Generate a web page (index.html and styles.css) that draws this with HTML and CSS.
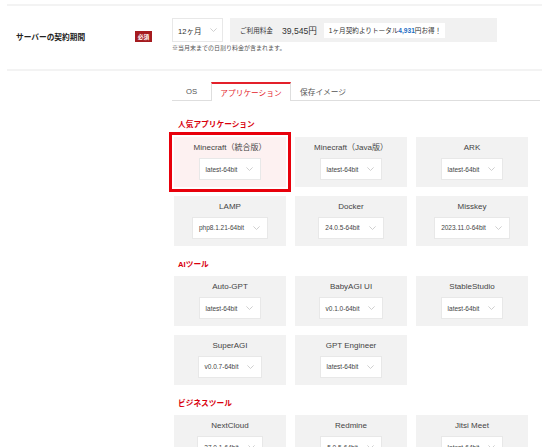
FILE: index.html
```html
<!DOCTYPE html>
<html lang="ja">
<head>
<meta charset="utf-8">
<title>サーバーの契約期間</title>
<link rel="stylesheet" href="styles.css">
</head>
<body>
<div class="page">
  <section class="contract">
    <div class="contract-label">
      <span class="label-text">サーバーの契約期間</span>
      <span class="badge">必須</span>
    </div>
    <div class="contract-body">
      <div class="contract-line">
        <div class="select select-term"><span>12ヶ月</span><svg class="chev" viewBox="0 0 7 4" width="7" height="4"><polyline points="0.4,0.4 3.5,3.5 6.6,0.4"/></svg></div>
        <div class="price-box">
          <span class="price-label">ご利用料金</span>
          <span class="price-value">39,545円</span>
          <span class="price-note">1ヶ月契約よりトータル<b>4,931</b>円お得！</span>
        </div>
      </div>
      <p class="notice">※当月末までの日割り料金が含まれます。</p>
    </div>
  </section>

  <section class="apps">
    <div class="tabs">
      <div class="tab tab-os">OS</div>
      <div class="tab tab-active">アプリケーション</div>
      <div class="tab">保存イメージ</div>
    </div>
    <div class="panel">
      <h3 class="group-title group-first">人気アプリケーション</h3>
      <div class="grid">
        <div class="card card-selected">
          <div class="card-title">Minecraft（統合版）</div>
          <div class="select select-card"><span>latest-64bit</span><svg class="chev" viewBox="0 0 7 4" width="7" height="4"><polyline points="0.4,0.4 3.5,3.5 6.6,0.4"/></svg></div>
        </div>
        <div class="card">
          <div class="card-title">Minecraft（Java版）</div>
          <div class="select select-card"><span>latest-64bit</span><svg class="chev" viewBox="0 0 7 4" width="7" height="4"><polyline points="0.4,0.4 3.5,3.5 6.6,0.4"/></svg></div>
        </div>
        <div class="card">
          <div class="card-title">ARK</div>
          <div class="select select-card"><span>latest-64bit</span><svg class="chev" viewBox="0 0 7 4" width="7" height="4"><polyline points="0.4,0.4 3.5,3.5 6.6,0.4"/></svg></div>
        </div>
        <div class="card">
          <div class="card-title">LAMP</div>
          <div class="select select-card"><span>php8.1.21-64bit</span><svg class="chev" viewBox="0 0 7 4" width="7" height="4"><polyline points="0.4,0.4 3.5,3.5 6.6,0.4"/></svg></div>
        </div>
        <div class="card">
          <div class="card-title">Docker</div>
          <div class="select select-card"><span>24.0.5-64bit</span><svg class="chev" viewBox="0 0 7 4" width="7" height="4"><polyline points="0.4,0.4 3.5,3.5 6.6,0.4"/></svg></div>
        </div>
        <div class="card">
          <div class="card-title">Misskey</div>
          <div class="select select-card"><span>2023.11.0-64bit</span><svg class="chev" viewBox="0 0 7 4" width="7" height="4"><polyline points="0.4,0.4 3.5,3.5 6.6,0.4"/></svg></div>
        </div>
      </div>

      <h3 class="group-title">AIツール</h3>
      <div class="grid">
        <div class="card">
          <div class="card-title">Auto-GPT</div>
          <div class="select select-card"><span>latest-64bit</span><svg class="chev" viewBox="0 0 7 4" width="7" height="4"><polyline points="0.4,0.4 3.5,3.5 6.6,0.4"/></svg></div>
        </div>
        <div class="card">
          <div class="card-title">BabyAGI UI</div>
          <div class="select select-card"><span>v0.1.0-64bit</span><svg class="chev" viewBox="0 0 7 4" width="7" height="4"><polyline points="0.4,0.4 3.5,3.5 6.6,0.4"/></svg></div>
        </div>
        <div class="card">
          <div class="card-title">StableStudio</div>
          <div class="select select-card"><span>latest-64bit</span><svg class="chev" viewBox="0 0 7 4" width="7" height="4"><polyline points="0.4,0.4 3.5,3.5 6.6,0.4"/></svg></div>
        </div>
        <div class="card">
          <div class="card-title">SuperAGI</div>
          <div class="select select-card"><span>v0.0.7-64bit</span><svg class="chev" viewBox="0 0 7 4" width="7" height="4"><polyline points="0.4,0.4 3.5,3.5 6.6,0.4"/></svg></div>
        </div>
        <div class="card">
          <div class="card-title">GPT Engineer</div>
          <div class="select select-card"><span>latest-64bit</span><svg class="chev" viewBox="0 0 7 4" width="7" height="4"><polyline points="0.4,0.4 3.5,3.5 6.6,0.4"/></svg></div>
        </div>
      </div>

      <h3 class="group-title">ビジネスツール</h3>
      <div class="grid">
        <div class="card">
          <div class="card-title">NextCloud</div>
          <div class="select select-card"><span>27.0.1-64bit</span><svg class="chev" viewBox="0 0 7 4" width="7" height="4"><polyline points="0.4,0.4 3.5,3.5 6.6,0.4"/></svg></div>
        </div>
        <div class="card">
          <div class="card-title">Redmine</div>
          <div class="select select-card"><span>5.0.5-64bit</span><svg class="chev" viewBox="0 0 7 4" width="7" height="4"><polyline points="0.4,0.4 3.5,3.5 6.6,0.4"/></svg></div>
        </div>
        <div class="card">
          <div class="card-title">Jitsi Meet</div>
          <div class="select select-card"><span>latest-64bit</span><svg class="chev" viewBox="0 0 7 4" width="7" height="4"><polyline points="0.4,0.4 3.5,3.5 6.6,0.4"/></svg></div>
        </div>
      </div>
    </div>
  </section>
</div>
</body>
</html>
```

FILE: styles.css
```css
html, body {
  margin: 0;
  padding: 0;
  background: #ffffff;
}

body {
  font-family: "Liberation Sans", "Noto Sans CJK JP", sans-serif;
  color: #333333;
}

.page {
  padding-top: 4px;
}

/* ---------- contract row ---------- */
.contract {
  margin-left: 7px;
  width: 535px;
  box-sizing: border-box;
  border-top: 2px solid #f3f3f3;
  border-bottom: 2px solid #f3f3f3;
  padding: 12px 0 15px 9px;
  display: flex;
  align-items: center;
}

.contract-label {
  width: 136px;
  margin-right: 20px;
  display: flex;
  justify-content: space-between;
  align-items: center;
}

.label-text {
  font-size: 7.7px;
  font-weight: bold;
  color: #222222;
}

.badge {
  width: 17px;
  height: 11px;
  background: #a51b1f;
  color: #ffffff;
  font-size: 5.8px;
  font-weight: bold;
  display: flex;
  align-items: center;
  justify-content: center;
}

.contract-line {
  display: flex;
  gap: 7px;
}

.select {
  box-sizing: border-box;
  background: #ffffff;
  border: 1px solid #e8e8e8;
  display: flex;
  align-items: center;
  color: #444444;
}

.chev {
  display: block;
  flex: none;
}

.chev polyline {
  fill: none;
  stroke: #c4c4c4;
  stroke-width: 0.8;
}

.select-term {
  width: 51px;
  height: 24px;
  padding: 0 5px 0 5px;
  justify-content: space-between;
  font-size: 7.6px;
  color: #333333;
}

.price-box {
  width: 267px;
  height: 24px;
  box-sizing: border-box;
  background: #f1f1f1;
  padding-left: 10px;
  display: flex;
  align-items: center;
}

.price-label {
  font-size: 6.6px;
  margin-right: 9px;
  color: #333333;
}

.price-value {
  font-size: 8.6px;
  margin-right: 7px;
  color: #333333;
}

.price-note {
  background: #ffffff;
  height: 15px;
  padding: 0 4px 0 5px;
  font-size: 6.6px;
  display: flex;
  align-items: center;
  color: #333333;
}

.price-note b {
  color: #1b6cc4;
}

.notice {
  margin: 1px 0 0;
  font-size: 6px;
  line-height: 11px;
  color: #555555;
}

/* ---------- apps ---------- */
.apps {
  margin-left: 172px;
  width: 368px;
  margin-top: 11px;
}

.tabs {
  display: flex;
  border-bottom: 1px solid #dedede;
}

.tab {
  box-sizing: border-box;
  height: 19px;
  margin-bottom: -1px;
  padding: 0 9px;
  display: flex;
  align-items: center;
  font-size: 7.7px;
  color: #555555;
}

.tab-os {
  width: 39px;
  padding: 0;
  justify-content: center;
}

.tab-active {
  width: 80px;
  padding: 0;
  justify-content: center;
  background: #ffffff;
  border-top: 2px solid #e3202a;
  border-left: 1px solid #dedede;
  border-right: 1px solid #dedede;
  color: #e3202a;
}

.panel {
  padding: 0 12px 0 2px;
}

.group-title {
  margin: 13.5px 0 5px 4px;
  font-size: 7.7px;
  line-height: 12px;
  font-weight: bold;
  color: #d9000d;
}

.group-first {
  margin-top: 18px;
  margin-bottom: 6px;
}

.grid {
  display: grid;
  grid-template-columns: repeat(3, 112px);
  column-gap: 9px;
  row-gap: 8.5px;
}

.card {
  height: 50px;
  box-sizing: border-box;
  padding-top: 5px;
  background: #f2f2f2;
  display: flex;
  flex-direction: column;
  align-items: center;
}

.card-selected {
  background: #fdf1f1;
  outline: 3px solid #e8000b;
  outline-offset: 2px;
}

.card-title {
  font-size: 8px;
  line-height: 12px;
  color: #444444;
  margin-bottom: 4px;
}

.select-card {
  height: 22px;
  padding: 0 7px 0 6px;
  gap: 9px;
  font-size: 6.5px;
}
```
